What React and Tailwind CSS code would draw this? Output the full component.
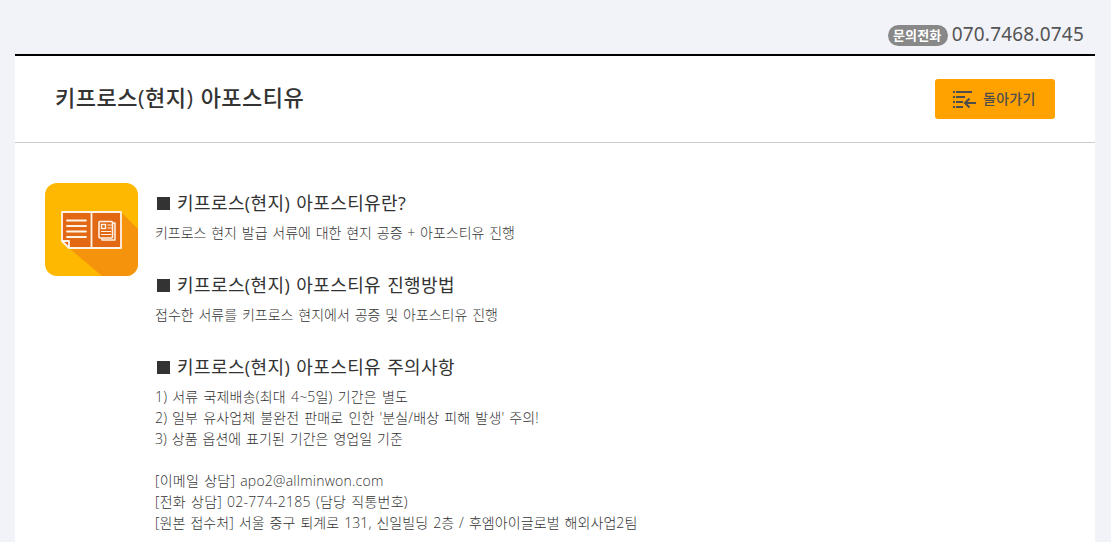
const sections = [
  {
    title: '키프로스(현지) 아포스티유란?',
    lines: [{ text: '키프로스 현지 발급 서류에 대한 현지 공증 + 아포스티유 진행', spacing: 'tracking-[-0.02px]' }],
  },
  {
    title: '키프로스(현지) 아포스티유 진행방법',
    lines: [{ text: '접수한 서류를 키프로스 현지에서 공증 및 아포스티유 진행', spacing: 'tracking-[0px]' }],
  },
  {
    title: '키프로스(현지) 아포스티유 주의사항',
    lines: [
      { text: '1) 서류 국제배송(최대 4~5일) 기간은 별도', spacing: 'tracking-[0.2px]' },
      { text: "2) 일부 유사업체 불완전 판매로 인한 '분실/배상 피해 발생' 주의!", spacing: 'tracking-[0.15px]' },
      { text: '3) 상품 옵션에 표기된 기간은 영업일 기준', spacing: 'tracking-[0.04px]' },
    ],
  },
];

const contacts = [
  { text: '[이메일 상담] apo2@allminwon.com', spacing: 'tracking-[0.24px]' },
  { text: '[전화 상담] 02-774-2185 (담당 직통번호)', spacing: 'tracking-[0.25px]' },
  { text: '[원본 접수처] 서울 중구 퇴계로 131, 신일빌딩 2층 / 후엠아이글로벌 해외사업2팀', spacing: 'tracking-[0.08px]' },
];

function BackIcon() {
  return (
    <svg width="24" height="20" viewBox="0 0 24 20" fill="none" stroke="#4d4d4d" strokeWidth="2">
      <path d="M0 3h2M3 3h16M0 8h2M3 8h9M0 13h2M3 13h7M0 18h2M3 18h7" />
      <path d="M12 14h11M16.500 9.500l-4.500 4.500l4.500 4.500" />
    </svg>
  );
}

function DocumentIcon() {
  return (
    <svg width="93" height="93" viewBox="0 0 93 93" fill="none" className="shrink-0">
      <defs>
        <clipPath id="tile">
          <rect width="93" height="93" rx="12" />
        </clipPath>
      </defs>
      <g clipPath="url(#tile)">
        <rect width="93" height="93" fill="#ffb800" />
        <path d="M77 30L93 46V93H57L24 65z" fill="#f5930c" />
      </g>
      <path d="M17 29H76V65H25L17 58z" fill="#e26814" stroke="#fff3e6" strokeWidth="1.8" strokeLinejoin="round" />
      <path d="M46.500 29V65" stroke="#fff3e6" strokeWidth="1.8" />
      <path d="M22 37.500h19M22 43h19M22 48.500h19M22 54h19" stroke="#fff3e6" strokeWidth="1.8" strokeLinecap="round" />
      <path d="M17 58h7v7z" fill="#e26814" stroke="#fff3e6" strokeWidth="1.8" strokeLinejoin="round" />
      <path d="M68 40h2v17h-13v-2" stroke="#fff3e6" strokeWidth="1.500" strokeLinejoin="round" />
      <rect x="54" y="38.500" width="13.500" height="16.500" rx="1" stroke="#fff3e6" strokeWidth="1.6" />
      <rect x="56.500" y="41.500" width="4" height="4" stroke="#fff3e6" strokeWidth="1.4" />
      <path d="M62.500 42h4M62.500 45h4M56 48.500h10M56 51.500h10" stroke="#fff3e6" strokeWidth="1.2" />
    </svg>
  );
}

function Line({ text, spacing }) {
  return <p className={`h-[21px] text-[14px] leading-[19px] font-light [word-spacing:1.2px] ${spacing}`}>{text}</p>;
}

export default function App() {
  return (
    <div className="h-[542px] overflow-hidden bg-[#f2f3f8] pr-4 pl-[15px] font-['Open_Sans','Noto_Sans_CJK_KR',sans-serif] text-[#333]">
      <div className="flex h-[54px] items-end justify-end gap-1 pr-[11px] pb-[8px]">
        <span className="flex h-[21px] w-[60px] items-center justify-center rounded-full bg-[#888] pr-px text-[13px] font-bold tracking-[0.1px] whitespace-nowrap text-white">
          문의전화
        </span>
        <span className="font-['Noto_Sans',sans-serif] text-[19px] leading-[23px] tracking-[0.2px] whitespace-nowrap text-[#555]">070.7468.0745</span>
      </div>
      <main className="h-[488px] border-t-2 border-black bg-white">
        <header className="flex h-[87px] items-center justify-between border-b border-[#ccc] px-10">
          <h1 className="pb-1 text-[22px] leading-8 font-medium tracking-[0.5px] whitespace-nowrap [word-spacing:1px]">키프로스(현지) 아포스티유</h1>
          <button className="flex h-10 w-[120px] items-center gap-[6px] rounded-[3px] bg-[#ffa200] pl-[18px] text-[14px] font-medium tracking-[0.3px] whitespace-nowrap text-[#4d4d4d]">
            <BackIcon />
            <span className="pb-px">돌아가기</span>
          </button>
        </header>
        <div className="flex gap-[17px] px-[30px] pt-10">
          <DocumentIcon />
          <div className="whitespace-nowrap">
            {sections.map((section) => (
              <section key={section.title} className="mb-[21px]">
                <h2 className="flex h-10 items-center text-[18px] font-normal tracking-[0.4px] [word-spacing:1px]">
                  <span className="mr-[7px] ml-[2px] size-[13px] bg-[#333]" />
                  {section.title}
                </h2>
                {section.lines.map((line) => (
                  <Line key={line.text} {...line} />
                ))}
              </section>
            ))}
            {contacts.map((line) => (
              <Line key={line.text} {...line} />
            ))}
          </div>
        </div>
      </main>
    </div>
  );
}
